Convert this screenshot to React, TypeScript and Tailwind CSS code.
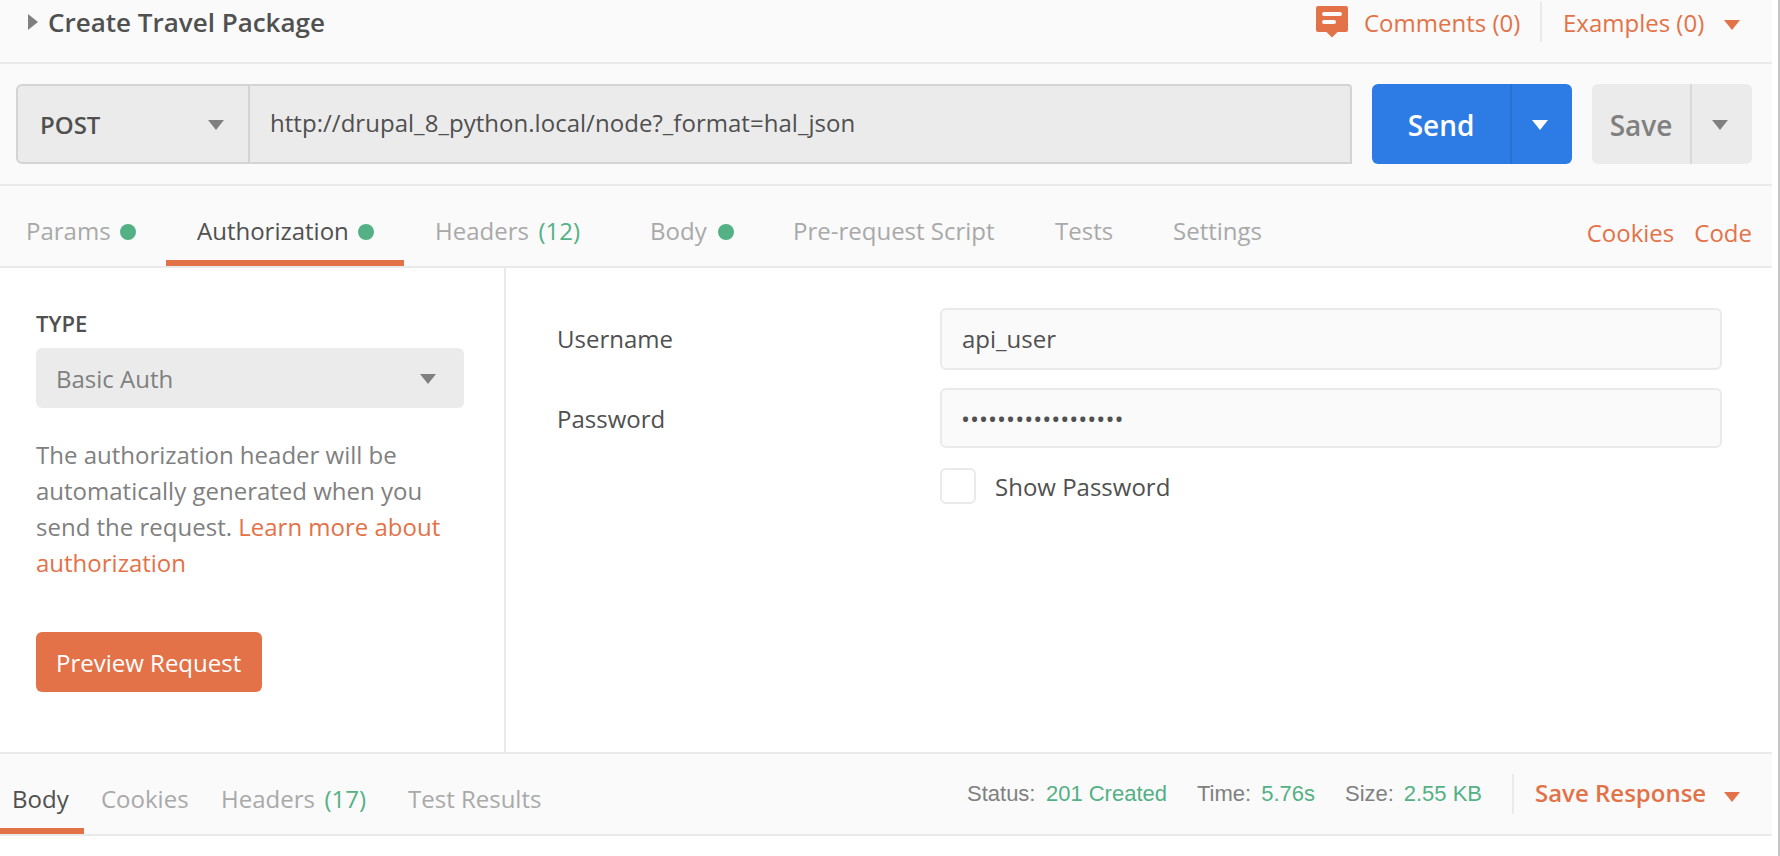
import type { ReactNode } from "react";

function Caret({ className = "" }: { className?: string }) {
  return (
    <svg className={`h-2.5 w-4 shrink-0 fill-current ${className}`} viewBox="0 0 16 10">
      <path d="M0 0h16L8 10z" />
    </svg>
  );
}

function CommentIcon() {
  return (
    <svg className="h-8 w-8 shrink-0" viewBox="0 0 32 32">
      <path d="M2 0h28a2 2 0 0 1 2 2v22a2 2 0 0 1-2 2h-8.500l-5.500 5.500-5.500-5.500H2a2 2 0 0 1-2-2V2a2 2 0 0 1 2-2z" fill="#e37248" />
      <path d="M8 8h16M8 16h10" stroke="#fafafa" strokeWidth="4" strokeLinecap="round" />
    </svg>
  );
}

function Dot() {
  return <span className="mt-0.5 h-4 w-4 shrink-0 rounded-full bg-[#54b085]" />;
}

function Tab({ className, active, children }: { className: string; active?: boolean; children: ReactNode }) {
  return (
    <button
      className={`flex shrink-0 items-center justify-between whitespace-nowrap border-b-6 pt-4 leading-9 ${
        active ? "border-[#e37248] text-[#505050]" : "border-transparent text-[#a9a9a9]"
      } ${className}`}
    >
      {children}
    </button>
  );
}

function Stat({ className, label, value }: { className: string; label: string; value: string }) {
  return (
    <div className={`flex shrink-0 justify-between whitespace-nowrap ${className}`}>
      <span className="text-[#808080]">{label}</span>
      <span className="text-[#54b085]">{value}</span>
    </div>
  );
}

export default function App() {
  return (
    <div className="h-[856px] w-[1780px] overflow-hidden border-r-2 border-[#c4c4c4] bg-white font-['Open_Sans',sans-serif] text-2xl text-[#505050]">
      <div className="flex h-full w-[1772px] flex-col">
        <header className="flex h-16 shrink-0 items-start justify-between border-b-2 border-[#eaeaea] bg-[#fafafa] pl-7 pr-8">
          <div className="flex pt-1">
            <svg className="mt-2.5 h-4 w-2.5 fill-[#808080]" viewBox="0 0 10 16">
              <path d="M0 0l10 8-10 8z" />
            </svg>
            <h1 className="ml-2.5 text-[26px] font-semibold leading-9">Create Travel Package</h1>
          </div>
          <div className="flex text-[#e37248]">
            <div className="mt-1.5">
              <CommentIcon />
            </div>
            <span className="ml-4 mt-[5px] w-[156px] whitespace-nowrap leading-9">Comments (0)</span>
            <div className="ml-5 mt-0.5 h-10 w-0.5 bg-[#eaeaea]" />
            <span className="ml-[21px] mt-[5px] w-[141px] whitespace-nowrap leading-9">Examples (0)</span>
            <Caret className="ml-5 mt-5" />
          </div>
        </header>

        <section className="flex h-[122px] shrink-0 items-center border-b-2 border-[#eaeaea] bg-[#fafafa] pl-4 pr-5">
          <div className="flex h-20 w-[1336px] rounded-l-md rounded-tr-sm border-2 border-[#d4d4d4] bg-[#ebebeb]">
            <div className="flex w-[232px] items-center justify-between border-r-2 border-[#d4d4d4] pl-[22px] pr-6">
              <span className="pt-0.5 font-semibold leading-9">POST</span>
              <Caret className="mt-0.5 text-[#808080]" />
            </div>
            <span className="ml-5 mt-[19px] leading-9 tracking-[0.03px]">http://drupal_8_python.local/node?_format=hal_json</span>
          </div>
          <div className="ml-5 flex h-20 w-[200px] overflow-hidden rounded-md bg-[#2d7be5] text-white">
            <div className="flex w-[140px] items-center justify-center border-r-2 border-[#2970d3] pt-1 text-[28px] font-semibold">Send</div>
            <div className="flex flex-1 items-center justify-center pr-1 pt-0.5">
              <Caret />
            </div>
          </div>
          <div className="ml-5 flex h-20 w-40 overflow-hidden rounded-md bg-[#ebebeb] text-[#808080]">
            <div className="flex w-[100px] items-center justify-center border-r-2 border-[#d9d9d9] pt-1 text-[28px] font-semibold">Save</div>
            <div className="flex flex-1 items-center justify-center pr-1 pt-0.5">
              <Caret />
            </div>
          </div>
        </section>

        <nav className="flex h-[82px] shrink-0 border-b-2 border-[#eaeaea] bg-[#fafafa] pr-5">
          <Tab className="ml-[26px] mr-[30px] w-[110px]">Params<Dot /></Tab>
          <Tab active className="w-[238px] pl-[31px] pr-[30px]">Authorization<Dot /></Tab>
          <Tab className="ml-[31px] w-[145px]">
            Headers<span className="text-[#54b085]">(12)</span>
          </Tab>
          <Tab className="ml-[70px] w-[84px]">Body<Dot /></Tab>
          <Tab className="ml-[59px] w-[202px]">Pre-request Script</Tab>
          <Tab className="ml-[60px] w-[58px]">Tests</Tab>
          <Tab className="ml-[60px] w-[90px]">Settings</Tab>
          <div className="ml-auto mt-[29px] flex gap-5 leading-9 text-[#e37248]">
            <a>Cookies</a>
            <a>Code</a>
          </div>
        </nav>

        <main className="flex h-[484px] shrink-0 bg-white">
          <aside className="w-[506px] border-r-2 border-[#eaeaea] pl-9 pr-10 pt-[37px]">
            <h2 className="text-[22px] font-semibold leading-9">TYPE</h2>
            <div className="mt-[7px] flex h-[60px] items-center justify-between rounded-md bg-[#ebebeb] pl-5 pr-7 text-[#808080]">
              <span className="pt-0.5 leading-9">Basic Auth</span>
              <Caret className="mt-0.5" />
            </div>
            <p className="mt-[29px] leading-9 text-[#808080]">
              The authorization header will be
              <br />
              automatically generated when you
              <br />
              send the request. <a className="text-[#e37248]">Learn more about
              <br />
              authorization</a>
            </p>
            <button className="mt-[51px] block h-[60px] w-[226px] whitespace-nowrap rounded-md bg-[#e37248] pl-5 pt-0.5 text-left text-white">
              Preview Request
            </button>
          </aside>

          <div className="flex-1 pl-[50px] pr-[50px] pt-10 leading-9">
            <div className="flex">
              <label className="mt-[13px] w-96 pl-px">Username</label>
              <div className="h-[62px] w-[782px] rounded-md border-2 border-[#eaeaea] bg-[#fafafa] pl-5 pt-[11px]">api_user</div>
            </div>
            <div className="mt-[18px] flex">
              <label className="mt-[13px] w-96 pl-px">Password</label>
              <div className="h-[60px] w-[782px] rounded-md border-2 border-[#eaeaea] bg-[#fafafa] pl-[19px] pt-[11px]">
                ••••••••••••••••••
              </div>
            </div>
            <div className="ml-96 mt-5 flex">
              <div className="h-9 w-9 rounded-md border-2 border-[#eaeaea] bg-white" />
              <span className="ml-[19px] mt-px">Show Password</span>
            </div>
          </div>
        </main>

        <footer className="flex h-[84px] shrink-0 border-y-2 border-[#eaeaea] bg-[#fafafa]">
          <Tab active className="w-[84px] pl-3">Body</Tab>
          <Tab className="ml-[17px] w-[88px]">Cookies</Tab>
          <Tab className="ml-8 w-[145px]">
            Headers<span className="text-[#54b085]">(17)</span>
          </Tab>
          <Tab className="ml-[42px] w-[134px]">Test Results</Tab>
          <div className="ml-auto flex pr-8">
            <div className="mt-[22px] flex font-['Liberation_Sans',Arial,sans-serif] text-[22px] leading-9">
              <Stat className="mr-[30px] w-[200px]" label="Status:" value="201 Created" />
              <Stat className="mr-[30px] w-[118px]" label="Time:" value="5.76s" />
              <Stat className="w-[137px]" label="Size:" value="2.55 KB" />
            </div>
            <div className="ml-[30px] mt-5 h-10 w-0.5 bg-[#eaeaea]" />
            <span className="ml-[21px] mt-[21px] w-[171px] whitespace-nowrap font-semibold leading-9 text-[#e37248]">Save Response</span>
            <Caret className="ml-[18px] mt-[38px] text-[#e37248]" />
          </div>
        </footer>
      </div>
    </div>
  );
}
